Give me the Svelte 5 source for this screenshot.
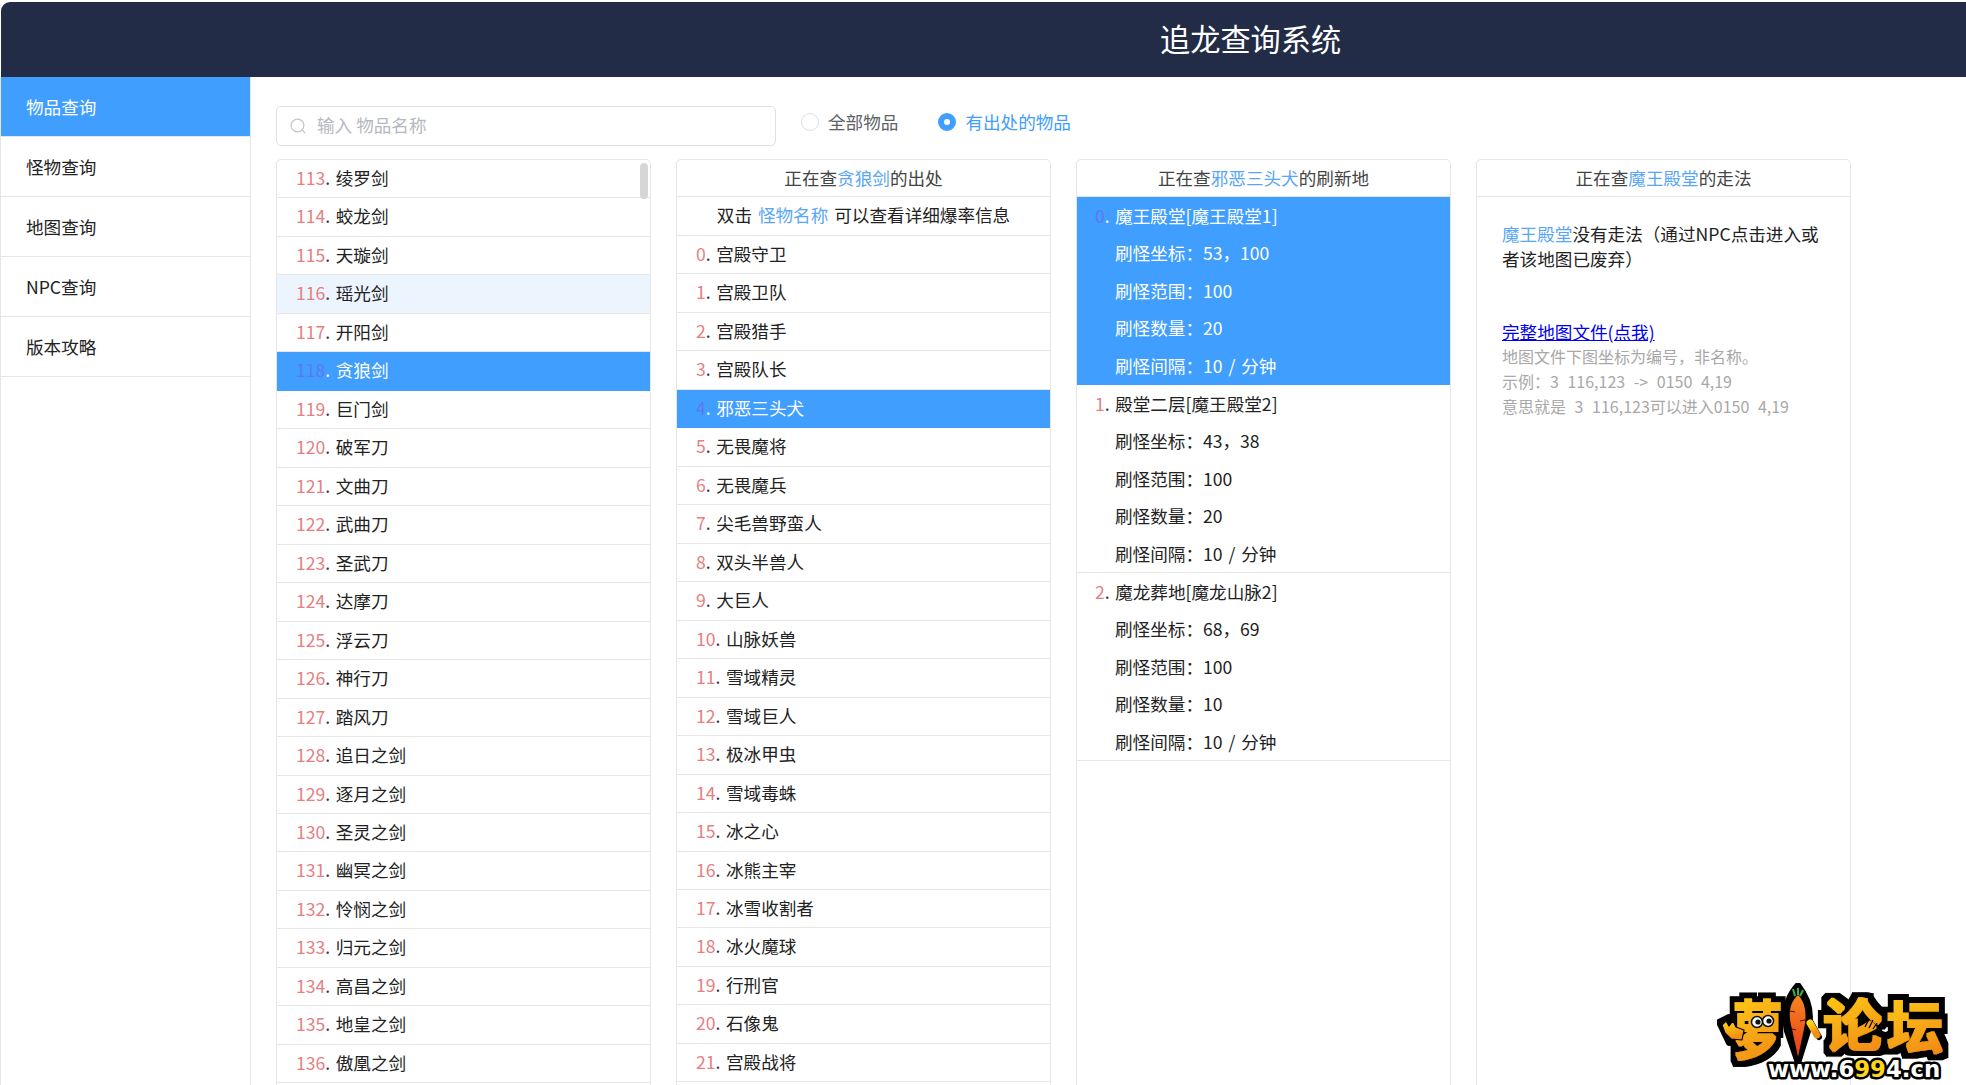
<script>
  const menu = ['物品查询', '怪物查询', '地图查询', 'NPC查询', '版本攻略'];

  const swordNames = ['绫罗剑', '蛟龙剑', '天璇剑', '瑶光剑', '开阳剑', '贪狼剑', '巨门剑', '破军刀', '文曲刀', '武曲刀', '圣武刀', '达摩刀', '浮云刀', '神行刀', '踏风刀', '追日之剑', '逐月之剑', '圣灵之剑', '幽冥之剑', '怜悯之剑', '归元之剑', '高昌之剑', '地皇之剑', '傲凰之剑'];
  const items = swordNames.map((name, i) => ({ id: 113 + i, name }));

  const monsterNames = ['宫殿守卫', '宫殿卫队', '宫殿猎手', '宫殿队长', '邪恶三头犬', '无畏魔将', '无畏魔兵', '尖毛兽野蛮人', '双头半兽人', '大巨人', '山脉妖兽', '雪域精灵', '雪域巨人', '极冰甲虫', '雪域毒蛛', '冰之心', '冰熊主宰', '冰雪收割者', '冰火魔球', '行刑官', '石像鬼', '宫殿战将'];

  const spots = [
    { name: '魔王殿堂[魔王殿堂1]', pos: '53，100', range: 100, count: 20, gap: '10 / 分钟' },
    { name: '殿堂二层[魔王殿堂2]', pos: '43，38', range: 100, count: 20, gap: '10 / 分钟' },
    { name: '魔龙葬地[魔龙山脉2]', pos: '68，69', range: 100, count: 10, gap: '10 / 分钟' }
  ];

  let mode = 'found';
</script>

<div class="app">
  <header class="topbar">
    <h1>追龙查询系统</h1>
  </header>

  <div class="body">
    <aside class="sidebar">
      {#each menu as label, i}
        <div class="menu-item" class:active={i === 0}>{label}</div>
      {/each}
    </aside>

    <main class="content">
      <div class="filters">
        <div class="search">
          <svg class="search-icon" viewBox="0 0 18 18" width="18" height="18" fill="none" stroke="#c0c4cc" stroke-width="1.2">
            <circle cx="8.5" cy="8.5" r="6.4" />
            <path d="M13.2 13.2 L16 16" />
          </svg>
          <input placeholder="输入 物品名称" />
        </div>
        <button class="radio" class:checked={mode === 'all'} onclick={() => (mode = 'all')}>
          <span class="dot"></span>全部物品
        </button>
        <button class="radio" class:checked={mode === 'found'} onclick={() => (mode = 'found')}>
          <span class="dot"></span>有出处的物品
        </button>
      </div>

      <div class="panels">
        <section class="panel">
          <div class="thumb"></div>
          {#each items as item}
            <div class="row" class:hover={item.id === 116} class:selected={item.id === 118}>
              <span class="num">{item.id}</span><span class="dotsep">.</span><span class="name">{item.name}</span>
            </div>
          {/each}
        </section>

        <section class="panel">
          <div class="panel-title">正在查<span class="hl">贪狼剑</span>的出处</div>
          <div class="hint">双击 <span class="hl">怪物名称</span> 可以查看详细爆率信息</div>
          {#each monsterNames as name, i}
            <div class="row" class:selected={i === 4}>
              <span class="num">{i}</span><span class="dotsep">.</span><span class="name">{name}</span>
            </div>
          {/each}
        </section>

        <section class="panel">
          <div class="panel-title">正在查<span class="hl">邪恶三头犬</span>的刷新地</div>
          {#each spots as spot, i}
            <div class="spot" class:selected={i === 0}>
              <div class="spot-name"><span class="num">{i}</span><span class="dotsep">.</span><span class="name">{spot.name}</span></div>
              <div class="attr">刷怪坐标：{spot.pos}</div>
              <div class="attr">刷怪范围：{spot.range}</div>
              <div class="attr">刷怪数量：{spot.count}</div>
              <div class="attr">刷怪间隔：{spot.gap}</div>
            </div>
          {/each}
        </section>

        <section class="panel">
          <div class="panel-title">正在查<span class="hl">魔王殿堂</span>的走法</div>
          <div class="route">
            <p class="route-text"><span class="hl">魔王殿堂</span>没有走法（通过NPC点击进入或者该地图已废弃）</p>
            <a class="map-link" href="#map">完整地图文件(点我)</a>
            <p class="note">地图文件下图坐标为编号，非名称。</p>
            <p class="note">示例：3 116,123 -&gt; 0150 4,19</p>
            <p class="note">意思就是 3 116,123可以进入0150 4,19</p>
          </div>
        </section>
      </div>
    </main>
  </div>

  <!-- watermark -->
  <svg class="logo" viewBox="0 0 232 100" width="232" height="100">
    <defs>
      <linearGradient id="gold" x1="0" y1="0" x2="0.3" y2="1">
        <stop offset="0" stop-color="#ffd616" />
        <stop offset="1" stop-color="#f28c12" />
      </linearGradient>
      <linearGradient id="carrot" x1="0" y1="0" x2="0" y2="1">
        <stop offset="0" stop-color="#f5871f" />
        <stop offset="1" stop-color="#e8391c" />
      </linearGradient>
      <filter id="fat" x="-25%" y="-25%" width="150%" height="150%">
        <feMorphology in="SourceGraphic" operator="dilate" radius="1.1" result="body" />
        <feMorphology in="SourceAlpha" operator="dilate" radius="6.5" result="wide" />
        <feFlood flood-color="#000" />
        <feComposite in2="wide" operator="in" result="edge" />
        <feMerge>
          <feMergeNode in="edge" />
          <feMergeNode in="body" />
        </feMerge>
      </filter>
    </defs>
    <path class="back" d="M81 2 C92 16 96 30 91 48 L81 80 L70 48 C66 30 70 14 81 2 Z" />
    <path class="back" d="M93 38 L102 54" stroke-width="17" />
    <path class="back" d="M2 39 L12 34 L26 44 L28 60 L12 60 Z" stroke-width="4" />
    <text class="big" filter="url(#fat)" transform="translate(16 70) scale(0.88 1.12)" font-size="56">萝</text>
    <text class="big" filter="url(#fat)" transform="translate(106 63) scale(1 0.92)" font-size="60">论</text>
    <text class="big" filter="url(#fat)" x="170" y="65" font-size="56">坛</text>
    <!-- hand -->
    <path d="M5 42 L9 38 L12 43 L16 38 L19 44 L27 47 L25 57 L14 56 L8 50 Z" fill="url(#gold)" stroke="#000" stroke-width="1.2" stroke-linejoin="round" />
    <path d="M148 44 L152 36 M152 45 L156 37 M156 46 L160 40" stroke="#000" stroke-width="1.2" fill="none" />
    <path d="M93 40 L100 52" stroke="url(#gold)" stroke-width="7" stroke-linecap="round" fill="none" />
    <path d="M81 12 C89 20 90 32 87 46 L81 74 L75 46 C71 32 72 20 81 12 Z" fill="url(#carrot)" />
    <path d="M76 6 L78 13 M81 5 L81 12 M86 7 L83 13" stroke="#3db04a" stroke-width="2" fill="none" />
    <path d="M73 28 L78 29 M88 37 L83 38 M75 46 L79 47" stroke="#3a1608" stroke-width="1" fill="none" />
    <circle cx="40" cy="39" r="5.5" fill="#fff" stroke="#111" stroke-width="1.5" />
    <circle cx="51" cy="38" r="5.5" fill="#fff" stroke="#111" stroke-width="1.5" />
    <circle cx="41" cy="39" r="2.6" fill="#111" />
    <circle cx="52" cy="38" r="2.6" fill="#111" />
    <text class="logo-url" x="51" y="94">www.6<tspan fill="#ffd616">99</tspan>4.cn</text>
  </svg>
</div>

<style>
  :global(body) {
    margin: 0;
    background: #fff;
    overflow: hidden;
  }

  .app {
    position: relative;
    height: 1085px;
    overflow: hidden;
    padding: 2px 0 0 1px;
    box-sizing: border-box;
    background: #fff;
    color: #222;
    font-family: "Noto Sans CJK SC", "Liberation Sans", sans-serif;
    font-size: 17.6px;
    word-spacing: 2px;
    display: flex;
    flex-direction: column;
  }

  .topbar {
    height: 75px;
    flex: none;
    box-sizing: border-box;
    background: #222c47;
    border-top-left-radius: 9px;
    display: flex;
    align-items: center;
    padding: 0 0 3px 1159px;
  }
  .topbar h1 {
    margin: 0;
    color: #fff;
    font-size: 30.2px;
    font-weight: 400;
  }

  .body {
    flex: 1;
    display: flex;
    min-height: 0;
  }

  .sidebar {
    width: 251px;
    margin-left: -1px;
    flex: none;
    box-sizing: border-box;
    border-left: 1px solid #e6e6e6;
    border-right: 1px solid #e6e6e6;
  }
  .menu-item {
    height: 60px;
    line-height: 59px;
    padding-left: 25px;
    box-sizing: border-box;
    border-bottom: 1px solid #e6e6e6;
  }
  .menu-item.active {
    background: #409eff;
    color: #fff;
  }

  .content {
    flex: 1;
    padding: 29px 0 0 25px;
    min-width: 0;
  }

  .filters {
    display: flex;
    align-items: flex-start;
    height: 40px;
  }
  .search {
    position: relative;
    width: 500px;
    height: 40px;
    margin-right: 25px;
  }
  .search-icon {
    position: absolute;
    left: 13px;
    top: 11px;
  }
  .search input {
    width: 100%;
    height: 100%;
    box-sizing: border-box;
    padding: 0 12px 3px 40px;
    border: 1px solid #dcdfe6;
    border-radius: 5px;
    outline: none;
    font: inherit;
    color: #606266;
  }
  .search input::placeholder {
    color: #b5b8bf;
  }

  .radio {
    all: unset;
    display: flex;
    align-items: center;
    height: 30px;
    color: #606266;
    margin-right: 40px;
    cursor: pointer;
  }
  .dot {
    width: 18px;
    height: 18px;
    margin: 2px 9px 0 0;
    box-sizing: border-box;
    border: 1px solid #dcdfe6;
    border-radius: 50%;
    background: #fff;
  }
  .radio.checked {
    color: #409eff;
  }
  .radio.checked .dot {
    border: 6px solid #409eff;
  }

  .panels {
    display: flex;
    gap: 25px;
    margin-top: 13px;
  }
  .panel {
    position: relative;
    width: 375px;
    height: 1000px;
    flex: none;
    box-sizing: border-box;
    border: 1px solid #e6e6e6;
    border-radius: 5px;
    overflow: hidden;
  }
  .thumb {
    position: absolute;
    top: 3px;
    right: 2px;
    width: 8px;
    height: 36px;
    border-radius: 4px;
    background: #d6d6d6;
  }

  .panel-title,
  .hint {
    height: 37px;
    line-height: 35px;
    text-align: center;
    border-bottom: 1px solid #e6e6e6;
    box-sizing: border-box;
  }
  .panel-title {
    color: #444;
  }
  .hint {
    height: 39px;
    line-height: 36.5px;
  }
  .hl {
    color: #58a6f5;
  }

  .row {
    height: 38.48px;
    line-height: 35.5px;
    padding-left: 19px;
    box-sizing: border-box;
    border-bottom: 1px solid #e6e6e6;
    white-space: nowrap;
  }
  .row.hover {
    background: #ecf4fe;
  }
  .row.selected,
  .spot.selected {
    background: #409eff;
    color: #fff;
    border-bottom-color: #409eff;
  }

  .num {
    color: #e57f82;
  }
  .selected .num {
    color: #5f78ee;
  }
  .dotsep {
    color: #333;
  }
  .selected .dotsep {
    color: #fff;
  }
  .name {
    margin-left: 5.5px;
  }

  .spot {
    height: 188px;
    box-sizing: border-box;
    border-bottom: 1px solid #e6e6e6;
    line-height: 37.4px;
  }
  .spot-name {
    padding-left: 18px;
  }
  .attr {
    padding-left: 38px;
  }

  .route {
    padding: 24px 25px 0;
  }
  .route-text {
    margin: 0 0 48px;
    line-height: 25px;
    color: #222;
  }
  .map-link {
    display: block;
    line-height: 25px;
    color: #0000ee;
    text-decoration: underline;
  }
  .note {
    margin: 0;
    font-size: 16px;
    line-height: 24.8px;
    color: #a8a8a8;
    word-spacing: 5px;
  }

  .logo {
    position: absolute;
    left: 1717px;
    top: 983px;
  }
  .logo text {
    font-family: "Noto Sans CJK SC", sans-serif;
    font-weight: 700;
  }
  .logo .big {
    fill: url(#gold);
  }
  .back {
    fill: #000;
    stroke: #000;
    stroke-width: 6;
    stroke-linejoin: round;
    stroke-linecap: round;
  }
  .logo .logo-url {
    font-family: "DejaVu Sans", sans-serif;
    font-size: 22.8px;
    font-weight: 700;
    fill: #fff;
    stroke: #000;
    stroke-width: 5;
    stroke-linejoin: round;
    paint-order: stroke;
  }
</style>
